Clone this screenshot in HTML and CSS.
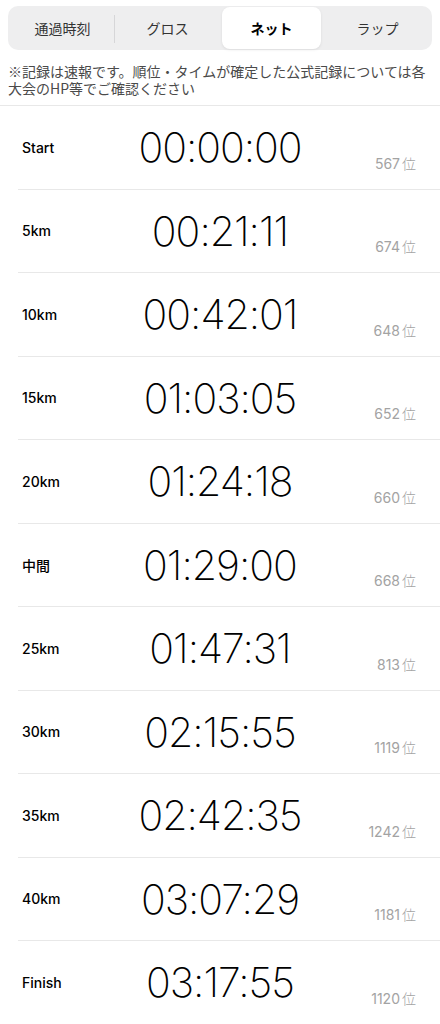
FILE: index.html
```html
<!DOCTYPE html>
<html lang="ja">
<head>
<meta charset="utf-8">
<link rel="stylesheet" href="styles.css">
</head>
<body>
<div class="seg">
  <div class="tab">通過時刻</div>
  <div class="tab">グロス</div>
  <div class="tab active">ネット</div>
  <div class="tab">ラップ</div>
</div>
<p class="note">※記録は速報です。順位・タイムが確定した公式記録については各大会のHP等でご確認ください</p>
<div class="list">
  <div class="row"><div class="label">Start</div><div class="time">00:00:00</div><div class="rank">567<span class="u">位</span></div></div>
  <div class="row"><div class="label">5km</div><div class="time">00:21:11</div><div class="rank">674<span class="u">位</span></div></div>
  <div class="row"><div class="label">10km</div><div class="time">00:42:01</div><div class="rank">648<span class="u">位</span></div></div>
  <div class="row"><div class="label">15km</div><div class="time">01:03:05</div><div class="rank">652<span class="u">位</span></div></div>
  <div class="row"><div class="label">20km</div><div class="time">01:24:18</div><div class="rank">660<span class="u">位</span></div></div>
  <div class="row"><div class="label">中間</div><div class="time">01:29:00</div><div class="rank">668<span class="u">位</span></div></div>
  <div class="row"><div class="label">25km</div><div class="time">01:47:31</div><div class="rank">813<span class="u">位</span></div></div>
  <div class="row"><div class="label">30km</div><div class="time">02:15:55</div><div class="rank">1119<span class="u">位</span></div></div>
  <div class="row"><div class="label">35km</div><div class="time">02:42:35</div><div class="rank">1242<span class="u">位</span></div></div>
  <div class="row"><div class="label">40km</div><div class="time">03:07:29</div><div class="rank">1181<span class="u">位</span></div></div>
  <div class="row"><div class="label">Finish</div><div class="time">03:17:55</div><div class="rank">1120<span class="u">位</span></div></div>
</div>
</body>
</html>
```

FILE: styles.css
```css
* { box-sizing: border-box; }
body {
  margin: 0;
  background: #fff;
  font-family: "Inter", "Noto Sans CJK JP", sans-serif;
  color: #000;
}
.seg {
  margin: 6px 8px 0;
  height: 44px;
  background: #eeeeef;
  border-radius: 10px;
  padding: 1px 2px;
  display: grid;
  grid-template-columns: repeat(4, 1fr);
}
.tab {
  display: flex;
  align-items: center;
  justify-content: center;
  font-family: "Noto Sans CJK JP", sans-serif;
  font-size: 14px;
  color: #333;
  border-radius: 8px;
  position: relative;
}
.tab:first-child::after {
  content: "";
  position: absolute;
  right: 0;
  top: 8px;
  bottom: 6px;
  width: 1px;
  background: #d6d6d8;
}
.tab.active {
  background: #fff;
  color: #000;
  font-weight: 700;
  margin: 0 4px 0 2px;
  box-shadow: 0 1px 3px rgba(0,0,0,0.08);
}
.note {
  margin: 0;
  padding: 13px 8px 8px;
  font-family: "Noto Sans CJK JP", sans-serif;
  font-size: 14px;
  line-height: 17px;
  color: #4a4a4a;
  border-bottom: 1px solid #e8e8e8;
}
.row {
  margin-left: 18px;
  height: 83.5px;
  border-bottom: 1px solid #e8e8e8;
  padding: 0 24px 0 4px;
  display: grid;
  grid-template-columns: 80px 1fr 80px;
  align-items: center;
}
.label {
  font-size: 14px;
  font-weight: 500;
  font-family: "Inter", "Noto Sans CJK JP", sans-serif;
}
.time {
  text-align: center;
  font-size: 41px;
  font-weight: 150;
  letter-spacing: -1px;
  padding-left: 2px;
}
.rank {
  align-self: end;
  text-align: right;
  padding-bottom: 16px;
  font-size: 14px;
  color: #a3a3a3;
  font-family: "Inter", "Noto Sans CJK JP", sans-serif;
}
.rank .u {
  margin-left: 2px;
  font-weight: 300;
}
```
